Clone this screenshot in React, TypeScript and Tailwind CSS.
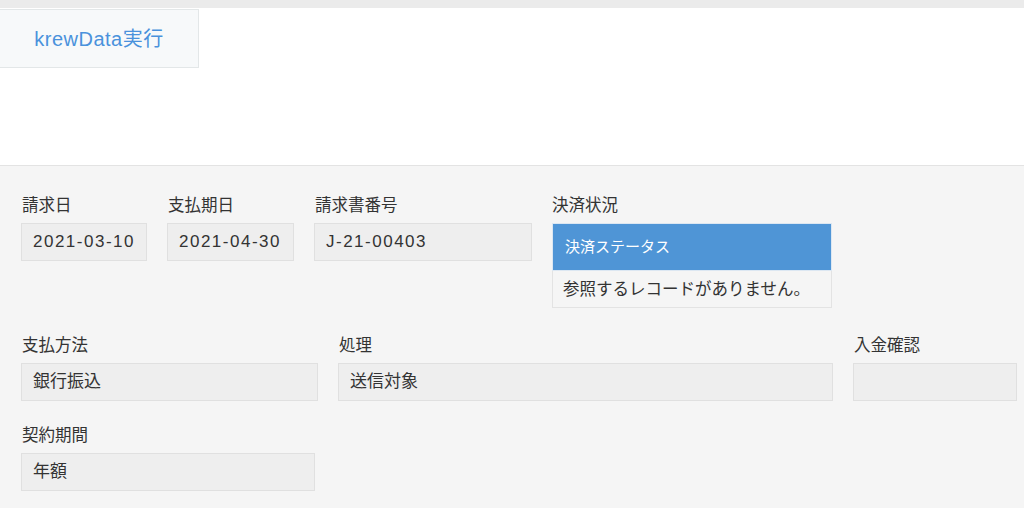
const font = { fontFamily: '"Liberation Sans", "Noto Sans CJK JP", sans-serif' };

function Field({ label, value, width, latin }: { label: string; value?: string; width: string; latin?: boolean }) {
  return (
    <div className={`flex flex-col ${width}`}>
      <div className="h-[18px] text-[16.5px] leading-[18px] text-[#333] pl-px">{label}</div>
      <div
        className={`mt-[9px] h-[38px] border border-[#e0e0e0] bg-[#eeeeee] px-[11px] flex items-center text-[17px] text-[#333] ${
          latin ? 'tracking-[1.5px]' : ''
        }`}
      >
        {value}
      </div>
    </div>
  );
}

export default function App() {
  return (
    <div className="w-[1024px] h-[508px] overflow-hidden bg-[#f5f5f5]" style={font}>
      <div className="h-[8px] bg-[#ebebeb]" />
      <div className="h-[158px] bg-white border-b border-[#e3e3e3] pt-px">
        <button className="w-[199px] h-[59px] bg-[#f7f9fa] border border-[#e3e7e8] border-l-0 text-[20px] tracking-[0.5px] text-[#4a92dc]">
          krewData実行
        </button>
      </div>
      <div className="pl-[21px] pt-[30px]">
        <div className="flex gap-5">
          <Field label="請求日" value="2021-03-10" width="w-[126px]" latin />
          <Field label="支払期日" value="2021-04-30" width="w-[127px]" latin />
          <Field label="請求書番号" value="J-21-00403" width="w-[218px]" latin />
          <div className="flex flex-col w-[280px]">
            <div className="h-[18px] text-[16.5px] leading-[18px] text-[#333]">決済状況</div>
            <div className="mt-[9px] h-[48px] bg-[#4f95d6] border border-[#dce7f2] flex items-center px-[12px] text-[15px] text-white">
              決済ステータス
            </div>
            <div className="h-[37px] border border-t-0 border-[#e3e3e3] bg-[#f5f5f5] flex items-center px-[10px] text-[16.5px] text-[#333]">
              参照するレコードがありません。
            </div>
          </div>
        </div>
        <div className="flex gap-5 mt-[28px]">
          <Field label="支払方法" value="銀行振込" width="w-[297px]" />
          <Field label="処理" value="送信対象" width="w-[495px]" />
          <Field label="入金確認" width="w-[164px]" />
        </div>
        <div className="flex gap-5 mt-[25px]">
          <Field label="契約期間" value="年額" width="w-[294px]" />
        </div>
      </div>
    </div>
  );
}
